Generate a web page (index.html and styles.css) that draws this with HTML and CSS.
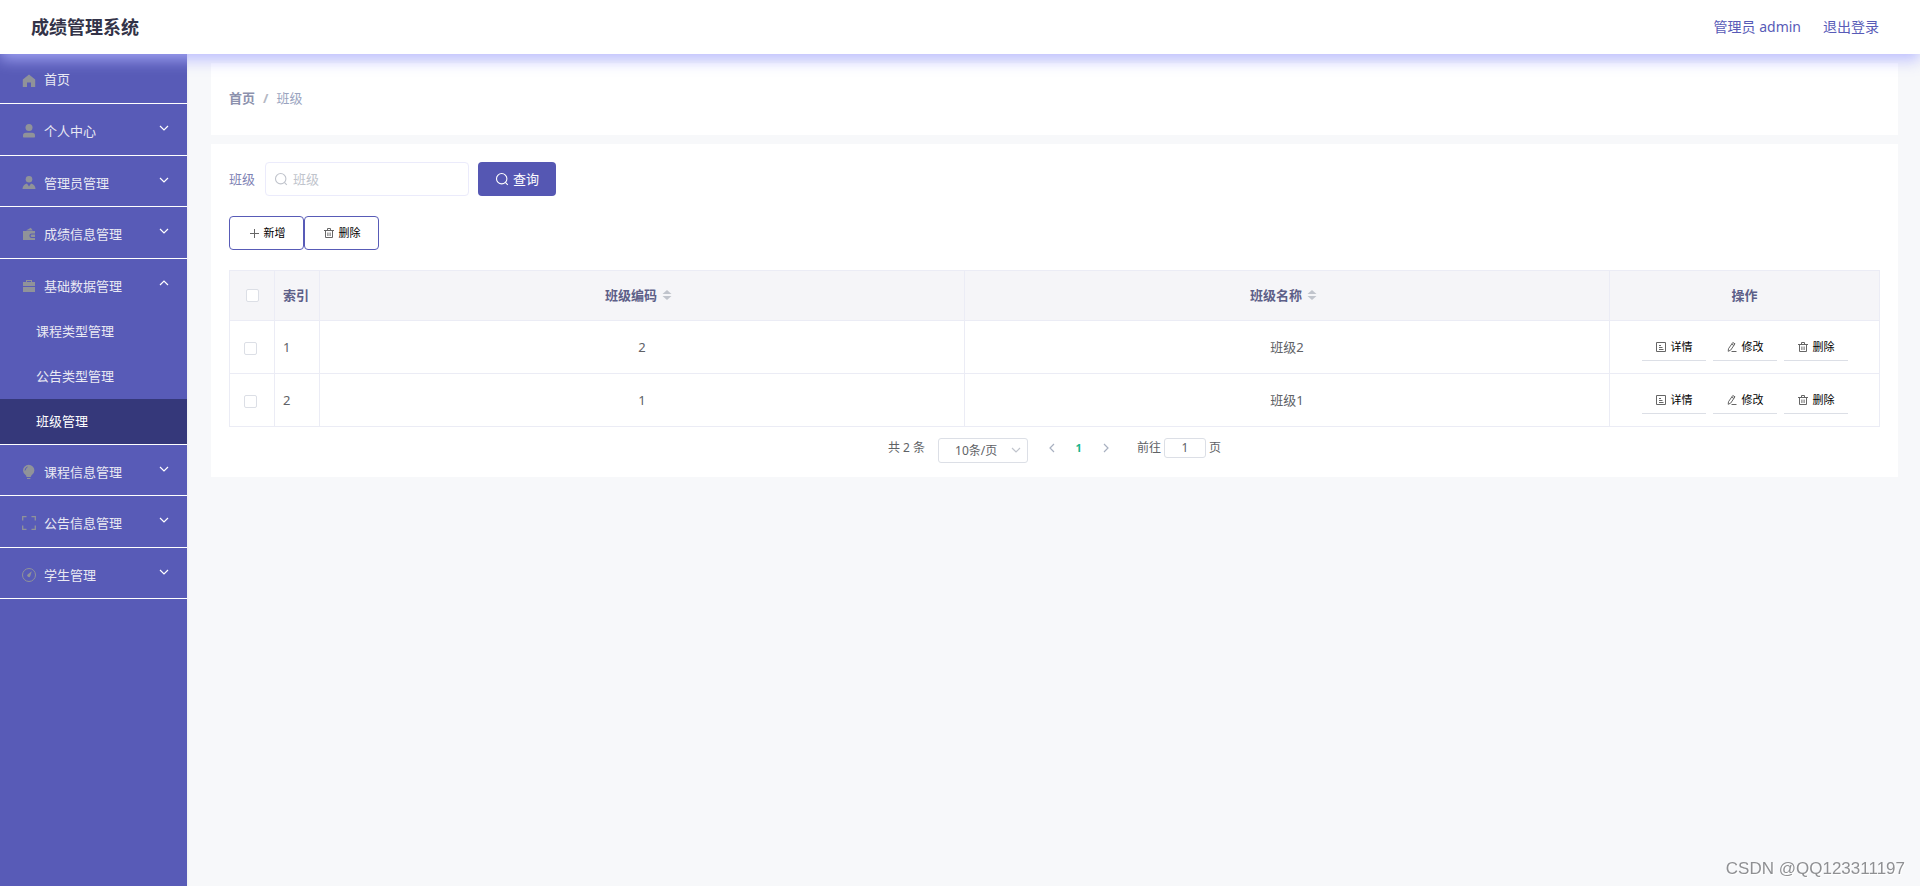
FILE: index.html
```html
<!DOCTYPE html>
<html lang="zh-CN">
<head>
<meta charset="utf-8">
<title>成绩管理系统</title>
<link rel="stylesheet" href="styles.css">
</head>
<body>
<svg class="sprite" aria-hidden="true">
  <symbol id="i-down" viewBox="0 0 12 12"><path d="M2 4l4 4 4-4" fill="none" stroke="currentColor" stroke-width="1.2"/></symbol>
  <symbol id="i-search" viewBox="0 0 14 14"><circle cx="6.7" cy="6.7" r="5.2" fill="none" stroke="currentColor" stroke-width="1.1"/><path d="M10.4 10.4l2.4 2.4" stroke="currentColor" stroke-width="1.1"/></symbol>
  <symbol id="i-plus" viewBox="0 0 12 12"><path d="M6.500 2v9M2 6.500h9" stroke="currentColor"/></symbol>
  <symbol id="i-trash" viewBox="0 0 12 12"><path d="M1 3.500h10M4.500 3V1.500h3V3M2.500 3.500v7h7v-7M4.900 5.500v3.500M7.100 5.500v3.500" fill="none" stroke="currentColor"/></symbol>
  <symbol id="i-doc" viewBox="0 0 12 12"><path d="M1.500 1.500h9v9h-9zM4 4.500h2M4 6.500h3.500M4 8.500h4.500" fill="none" stroke="currentColor"/></symbol>
  <symbol id="i-edit" viewBox="0 0 12 12"><path d="M6.800 1.500l2.200 1.300-4.300 6.300-2.500 1.200.3-2.600zM5.800 3.200l2.200 1.300M5.500 10.500h5" fill="none" stroke="currentColor"/></symbol>
</svg>

<header class="topbar">
  <h1 class="brand">成绩管理系统</h1>
  <nav class="account">
    <a href="#">管理员 admin</a>
    <a href="#">退出登录</a>
  </nav>
</header>

<div class="shell">
  <nav class="sidebar">
    <ul class="menu">
      <li class="menu-item home">
        <a class="menu-title" href="#"><svg class="menu-icon" viewBox="0 0 16 16"><path d="M8 2.500L14.200 7.500V15H10V10.500H6V15H1.800V7.500z"/></svg>首页</a>
      </li>
      <li class="menu-item tall">
        <button class="menu-title"><svg class="menu-icon" viewBox="0 0 16 16"><circle cx="8" cy="4.600" r="3.500"/><path d="M2 13.800v-1.300Q2 9.700 5 9.700h6q3 0 3 2.800v1.300q0 .7-.7.7H2.700q-.7 0-.7-.7z"/></svg>个人中心<svg class="arrow"><use href="#i-down"/></svg></button>
      </li>
      <li class="menu-item">
        <button class="menu-title"><svg class="menu-icon" viewBox="0 0 16 16"><circle cx="8" cy="4.300" r="3.300"/><path d="M6 8.500l2 3 2-3q4.300 1 4.500 5.500h-13Q1.700 9.500 6 8.500z"/></svg>管理员管理<svg class="arrow"><use href="#i-down"/></svg></button>
      </li>
      <li class="menu-item tall">
        <button class="menu-title"><svg class="menu-icon" viewBox="0 0 16 16"><path d="M5 4.500L9.800 1.800l2 2.700zM2 5h12v2.500h-3.300a2.300 2.300 0 000 4.600H14V14H2zM10.900 8.500H14v2.600h-3.100a1.300 1.300 0 010-2.600z"/></svg>成绩信息管理<svg class="arrow"><use href="#i-down"/></svg></button>
      </li>
      <li class="menu-item">
        <button class="menu-title" aria-expanded="true"><svg class="menu-icon" viewBox="0 0 16 16"><path d="M2 4h3V2h6v2h3v4H2zM6 3v1h4V3zM2 9h12v5H2z" fill-rule="evenodd"/></svg>基础数据管理<svg class="arrow up"><use href="#i-down"/></svg></button>
        <ul class="submenu">
          <li><a href="#">课程类型管理</a></li>
          <li><a href="#">公告类型管理</a></li>
          <li><a class="active" href="#" aria-current="page">班级管理</a></li>
        </ul>
      </li>
      <li class="menu-item">
        <button class="menu-title"><svg class="menu-icon" viewBox="0 0 16 16"><path d="M5 11.500Q2 9.500 2 6.500a5.700 5.700 0 0111.400 0q0 3-3 5L9.800 13H5.600zM6 14h3.400v1H6z"/><path d="M4 6.500Q4.200 3.800 6.500 3" fill="none" stroke="#585bb7"/></svg>课程信息管理<svg class="arrow"><use href="#i-down"/></svg></button>
      </li>
      <li class="menu-item tall">
        <button class="menu-title"><svg class="menu-icon" viewBox="0 0 16 16"><path d="M1.700 5.500V1.700h3.800M10.500 1.700h3.800v3.800M14.300 10.500v3.800h-3.800M5.500 14.300H1.700v-3.800" fill="none" stroke="currentColor" stroke-width="1.300"/></svg>公告信息管理<svg class="arrow"><use href="#i-down"/></svg></button>
      </li>
      <li class="menu-item">
        <button class="menu-title"><svg class="menu-icon" viewBox="0 0 16 16"><circle cx="8" cy="8" r="6.500" fill="none" stroke="currentColor"/><path d="M10.800 4.300L9.300 9a1.600 1.600 0 11-2.700-1.600z"/></svg>学生管理<svg class="arrow"><use href="#i-down"/></svg></button>
      </li>
    </ul>
  </nav>

  <main class="content">
    <nav class="panel breadcrumb" aria-label="面包屑">
      <a href="#">首页</a><span class="slash">/</span><span>班级</span>
    </nav>

    <section class="panel">
      <form class="search">
        <label for="keyword">班级</label>
        <div class="field">
          <svg class="icon-lg"><use href="#i-search"/></svg>
          <input id="keyword" type="text" placeholder="班级">
        </div>
        <button class="btn-primary" type="button"><svg class="icon-lg"><use href="#i-search"/></svg>查询</button>
      </form>

      <div class="actions">
        <button class="btn-outline"><svg class="icon"><use href="#i-plus"/></svg>新增</button>
        <button class="btn-outline"><svg class="icon"><use href="#i-trash"/></svg>删除</button>
      </div>

      <table class="grid">
        <colgroup><col class="col-narrow"><col class="col-narrow"><col><col><col class="col-ops"></colgroup>
        <thead>
          <tr>
            <th><input type="checkbox" aria-label="全选"></th>
            <th class="index">索引</th>
            <th>班级编码<svg class="sort" viewBox="0 0 10 12"><path d="M5 1l4.500 4h-9zM5 11L.5 7h9z"/></svg></th>
            <th>班级名称<svg class="sort" viewBox="0 0 10 12"><path d="M5 1l4.500 4h-9zM5 11L.5 7h9z"/></svg></th>
            <th>操作</th>
          </tr>
        </thead>
        <tbody>
          <tr>
            <td><input type="checkbox" aria-label="选择第1行"></td>
            <td class="index">1</td>
            <td>2</td>
            <td>班级2</td>
            <td>
              <div class="ops">
                <button><svg class="icon"><use href="#i-doc"/></svg>详情</button>
                <button><svg class="icon"><use href="#i-edit"/></svg>修改</button>
                <button><svg class="icon"><use href="#i-trash"/></svg>删除</button>
              </div>
            </td>
          </tr>
          <tr>
            <td><input type="checkbox" aria-label="选择第2行"></td>
            <td class="index">2</td>
            <td>1</td>
            <td>班级1</td>
            <td>
              <div class="ops">
                <button><svg class="icon"><use href="#i-doc"/></svg>详情</button>
                <button><svg class="icon"><use href="#i-edit"/></svg>修改</button>
                <button><svg class="icon"><use href="#i-trash"/></svg>删除</button>
              </div>
            </td>
          </tr>
        </tbody>
      </table>

      <div class="pagination">
        <span>共 2 条</span>
        <div class="page-size">
          <select aria-label="每页条数"><option>10条/页</option></select>
          <svg class="select-arrow"><use href="#i-down"/></svg>
        </div>
        <div class="pager">
          <button aria-label="上一页"><svg class="chev left"><use href="#i-down"/></svg></button>
          <button class="current" aria-current="page">1</button>
          <button aria-label="下一页"><svg class="chev right"><use href="#i-down"/></svg></button>
        </div>
        <label class="jump">前往<input type="text" value="1">页</label>
      </div>
    </section>
  </main>
</div>
<div class="watermark">CSDN @QQ123311197</div>
</body>
</html>
```
FILE: styles.css
```css
* { box-sizing: border-box; }

body {
  margin: 0;
  min-height: 100vh;
  display: flex;
  flex-direction: column;
  background: #f7f8fa;
  color: #606266;
  font: 13px/20px "Noto Sans", "Noto Sans CJK SC", sans-serif;
}

button, input, select { font: inherit; color: inherit; margin: 0; }
button { background: none; border: 0; padding: 0; cursor: pointer; }
a { color: inherit; text-decoration: none; }
ul { list-style: none; margin: 0; padding: 0; }
.sprite { display: none; }
.icon { width: 12px; height: 12px; color: #666; }
.icon-lg { width: 14px; height: 14px; }

/* top bar */
.topbar {
  position: relative;
  z-index: 1;
  display: flex;
  align-items: center;
  justify-content: space-between;
  height: 54px;
  padding: 0 41px 0 31px;
  background: #fff;
  box-shadow: 0 6px 14px rgba(174, 176, 255, 0.8);
}
.brand { margin: 0; font-size: 18px; line-height: 26px; color: #333348; }
.account { display: flex; gap: 22px; font-size: 14px; color: #585bb7; }

.shell { flex: 1; display: flex; }

/* side menu */
.sidebar {
  flex: none;
  width: 187px;
  background: #585bb7;
  color: #e9e9f3;
  box-shadow: 1px 0 2px rgba(0, 0, 0, 0.04);
}
.menu-item { min-height: 51px; border-bottom: 1px solid #fff; }
.menu-item.home { min-height: 50px; }
.menu-item.tall { min-height: 52px; }
.menu-title {
  display: flex;
  align-items: center;
  width: 100%;
  height: 50px;
  padding: 3px 16px 0 21px;
  text-align: left;
}
.home .menu-title { height: 49px; padding-top: 0; }
.home .menu-icon { margin-top: 3px; }
.menu-icon {
  width: 16px;
  height: 16px;
  margin-right: 7px;
  color: #909399;
  fill: currentColor;
}
.arrow { width: 12px; height: 12px; margin: 0 1px 6px auto; color: #fff; }
.arrow.up { transform: rotate(180deg); }
.submenu a { display: block; padding-left: 36px; line-height: 45px; }
.submenu .active { background: #35387a; color: #fff; }

/* content */
.content {
  flex: 1;
  min-width: 0;
  display: flex;
  flex-direction: column;
  gap: 9px;
  padding: 9px 22px 9px 24px;
}
.panel { background: #fff; padding: 18px 18px 14px; }
.breadcrumb {
  display: flex;
  align-items: center;
  height: 72px;
  padding-bottom: 20px;
  color: #9aa4c0;
}
.breadcrumb a { font-weight: 700; color: #8c91ad; }
.slash { margin: 0 8px; color: #b4b8c4; font-weight: 700; }

.search { display: flex; align-items: center; color: #7f83b5; }
.field {
  display: flex;
  align-items: center;
  gap: 5px;
  width: 204px;
  height: 34px;
  margin: 0 9px 0 10px;
  padding: 0 8px;
  border: 1px solid #ebebfb;
  border-radius: 4px;
  color: #c0c4cc;
}
.field input { flex: 1; min-width: 0; border: 0; padding: 0; outline: 0; background: none; }
.field input::placeholder { color: #c0c4cc; opacity: 1; }
.btn-primary {
  display: flex;
  align-items: center;
  justify-content: center;
  gap: 4px;
  width: 78px;
  height: 34px;
  border-radius: 4px;
  background: #5557b3;
  color: #fff;
}

.actions { display: flex; margin: 20px 0; }
.btn-outline {
  display: flex;
  align-items: center;
  justify-content: center;
  gap: 4px;
  width: 75px;
  height: 34px;
  border: 1px solid #585bb7;
  border-radius: 4px;
  font-size: 11px;
  color: #000;
}

/* table */
.grid {
  width: 100%;
  table-layout: fixed;
  border-collapse: collapse;
  text-align: center;
}
.col-narrow { width: 45px; }
.col-ops { width: 270px; }
.grid th, .grid td { border: 1px solid #ebecf5; padding: 0; vertical-align: middle; }
.grid th { height: 50px; padding-bottom: 2px; background: #f5f5f8; color: #5d5f88; font-weight: 700; }
.grid td { height: 53px; }
.grid .index { padding-left: 8px; text-align: left; }
.grid input {
  appearance: none;
  display: block;
  width: 13px;
  height: 13px;
  margin: 2px auto 0;
  border: 1px solid #dcdfe6;
  border-radius: 2px;
  background: #fff;
}
.grid td input { margin-left: 14px; }
.sort { width: 10px; height: 12px; margin: 0 7px 0 5px; vertical-align: -1px; fill: #c0c4cc; }
.ops { display: flex; justify-content: center; gap: 7px; }
.ops button {
  display: flex;
  align-items: center;
  justify-content: center;
  gap: 4px;
  width: 64px;
  height: 28px;
  border-bottom: 1px solid #dcdfe6;
  font-size: 11px;
  color: #000;
}

/* pagination */
.pagination {
  display: flex;
  align-items: flex-start;
  justify-content: center;
  padding-top: 11px;
  font-size: 12px;
}
.page-size { position: relative; margin: 0 10px 0 13px; }
.page-size select {
  appearance: none;
  display: block;
  width: 90px;
  height: 25px;
  padding: 0 16px;
  border: 1px solid #dcdfe6;
  border-radius: 3px;
  background: #fff;
}
.select-arrow {
  position: absolute;
  right: 6px;
  top: 6px;
  width: 12px;
  height: 12px;
  color: #c0c4cc;
  pointer-events: none;
}
.pager { display: flex; }
.pager button {
  display: flex;
  align-items: center;
  justify-content: center;
  width: 27px;
  height: 20px;
}
.pager .current { color: #18b48c; font-size: 11px; font-weight: 700; }
.chev { width: 12px; height: 12px; color: #a8b0c0; }
.left { transform: rotate(90deg); }
.right { transform: rotate(-90deg); }
.jump { display: flex; margin-left: 18px; }
.jump input {
  width: 42px;
  height: 20px;
  margin: 0 3px;
  padding: 0;
  border: 1px solid #dcdfe6;
  border-radius: 3px;
  text-align: center;
}

.watermark {
  position: fixed;
  right: 15px;
  bottom: 7px;
  font: 17px/20px "Liberation Sans", Arial, sans-serif;
  color: #8f9093;
  text-shadow: 1px 1px 0 #fff;
}
```
